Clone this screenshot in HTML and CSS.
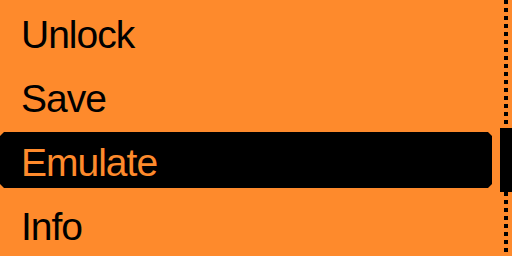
FILE: index.html
```html
<!DOCTYPE html>
<html lang="en">
<head>
<meta charset="utf-8">
<title>Menu</title>
<link rel="stylesheet" href="styles.css">
</head>
<body>
<div class="screen">
  <ul class="menu">
    <li class="item">Unlock</li>
    <li class="item">Save</li>
    <li class="item selected">Emulate</li>
    <li class="item">Info</li>
  </ul>
  <div class="scrollbar">
    <div class="thumb"></div>
  </div>
</div>
</body>
</html>
```

FILE: styles.css
```css
html, body {
  margin: 0;
  padding: 0;
  background: #fe8a2c;
}

.screen {
  display: flex;
  width: 512px;
  height: 256px;
  gap: 8px;
  background: #fe8a2c;
  overflow: hidden;
}

.menu {
  list-style: none;
  margin: 0;
  padding: 0;
  width: 492px;
  display: flex;
  flex-direction: column;
}

.item {
  height: 56px;
  margin: 4px 0;
  padding-left: 21px;
  font-family: "Liberation Sans", Arial, sans-serif;
  font-size: 39px;
  line-height: 61px;
  letter-spacing: -1px;
  color: #000;
  white-space: nowrap;
}

.item.selected {
  background: #000;
  color: #fe8a2c;
  clip-path: polygon(4px 0, calc(100% - 4px) 0, 100% 4px, 100% calc(100% - 4px), calc(100% - 4px) 100%, 4px 100%, 0 calc(100% - 4px), 0 4px);
}

.scrollbar {
  width: 12px;
  height: 256px;
  background-image: linear-gradient(#000 50%, transparent 50%);
  background-size: 4px 8px;
  background-repeat: repeat-y;
  background-position: 4px 0;
}

.thumb {
  margin-top: 128px;
  height: 64px;
  background: #000;
}
```
